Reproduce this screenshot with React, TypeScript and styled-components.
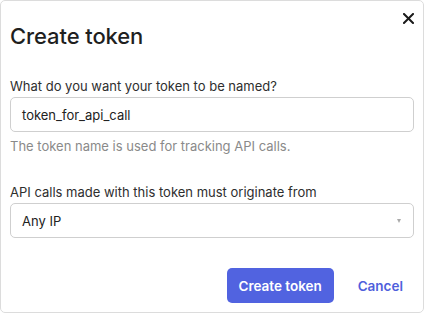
import React from "react";
import styled, { createGlobalStyle } from "styled-components";

const Global = createGlobalStyle`
  html, body { margin: 0; padding: 0; background: #fff; }
  body { font-family: Inter, "Noto Sans", sans-serif; }
  * { box-sizing: border-box; }
`;

const Dialog = styled.div`
  position: relative;
  width: 424px;
  height: 313px;
  border: 1px solid #dcdcdc;
  border-radius: 5px;
  background: #fff;
  padding: 0 9px 0 9px;
  display: flex;
  flex-direction: column;
`;

const CloseButton = styled.button`
  position: absolute;
  top: 9px;
  right: 7px;
  width: 16px;
  height: 16px;
  border: 0;
  background: none;
  padding: 0;
  display: flex;
  align-items: center;
  justify-content: center;
  cursor: pointer;
`;

const Title = styled.h1`
  margin: 22px 0 0 0;
  font-size: 22px;
  font-weight: 500;
  color: #1f1f1f;
  line-height: 27px;
  letter-spacing: -0.1px;
`;

const Field = styled.div<{ $top: number }>`
  display: flex;
  flex-direction: column;
  margin-top: ${(p) => p.$top}px;
`;

const Label = styled.label`
  font-size: 13px;
  color: #2e2e2e;
  line-height: 17px;
  margin-bottom: 2px;
`;

const Input = styled.div`
  height: 35px;
  border: 1px solid #cfcfcf;
  border-radius: 5px;
  display: flex;
  align-items: center;
  padding: 0 11px;
  font-size: 13px;
  color: #222;
  position: relative;
`;

const Help = styled.div`
  margin-top: 6px;
  font-size: 13px;
  color: #8a8a8a;
  line-height: 17px;
`;

const Caret = styled.span`
  position: absolute;
  right: 12px;
  top: 15px;
  width: 0;
  height: 0;
  border-left: 2.5px solid transparent;
  border-right: 2.5px solid transparent;
  border-top: 4px solid #aaa;
`;

const Footer = styled.div`
  display: flex;
  justify-content: flex-end;
  align-items: center;
  gap: 24px;
  margin-top: 30px;
  padding-right: 11px;
`;

const Primary = styled.button`
  height: 35px;
  width: 107px;
  border: 0;
  border-radius: 5px;
  background: #5163e0;
  color: #fff;
  font-family: Inter, sans-serif;
  font-size: 13.5px;
  font-weight: 600;
`;

const Link = styled.button`
  border: 0;
  background: none;
  padding: 0;
  color: #4f5fdc;
  font-family: Inter, sans-serif;
  font-size: 13.5px;
  font-weight: 600;
`;

export default function App() {
  return (
    <>
      <Global />
      <Dialog>
        <CloseButton aria-label="Close">
          <svg width="11" height="11" viewBox="0 0 11 11">
            <path d="M1 1L10 10M10 1L1 10" stroke="#1a1a1a" strokeWidth="2" strokeLinecap="square" />
          </svg>
        </CloseButton>
        <Title>Create token</Title>
        <Field $top={28}>
          <Label>What do you want your token to be named?</Label>
          <Input>token_for_api_call</Input>
          <Help>The token name is used for tracking API calls.</Help>
        </Field>
        <Field $top={29}>
          <Label>API calls made with this token must originate from</Label>
          <Input>
            Any IP
            <Caret />
          </Input>
        </Field>
        <Footer>
          <Primary>Create token</Primary>
          <Link>Cancel</Link>
        </Footer>
      </Dialog>
    </>
  );
}
